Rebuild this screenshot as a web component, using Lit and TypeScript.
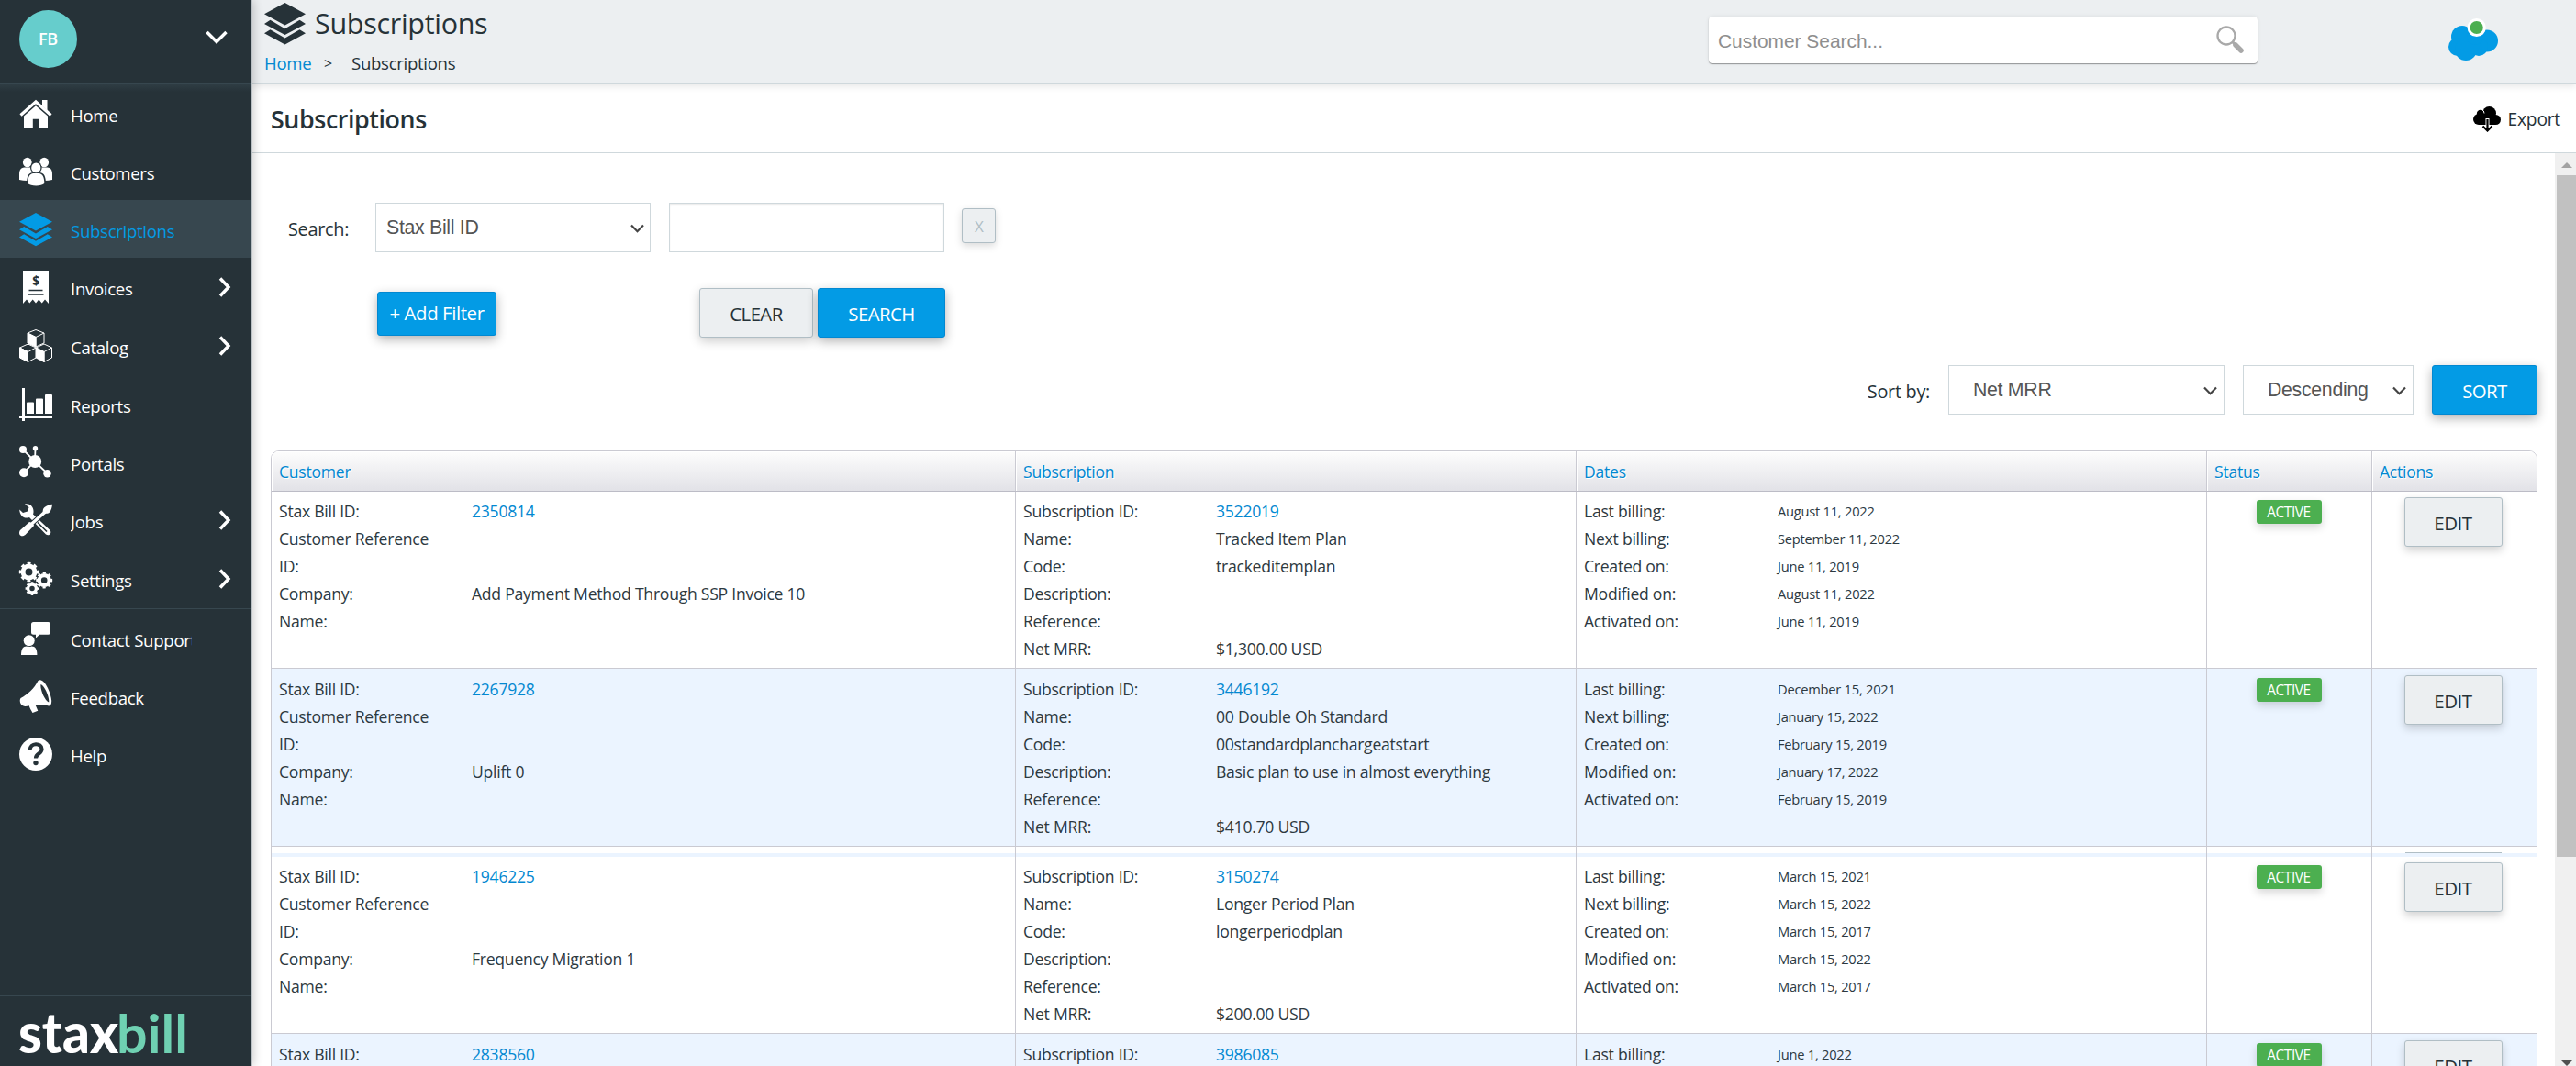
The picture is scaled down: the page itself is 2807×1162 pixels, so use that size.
import { LitElement, html, svg, css, nothing } from "lit";
import { customElement, property } from "lit/decorators.js";
import { classMap } from "lit/directives/class-map.js";

interface Subscription {
  customerId: string;
  company: string;
  id: string;
  name: string;
  code: string;
  description: string;
  mrr: string;
  dates: string[];
}

const subscriptions: Subscription[] = [
  {
    customerId: "2350814",
    company: "Add Payment Method Through SSP Invoice 10",
    id: "3522019",
    name: "Tracked Item Plan",
    code: "trackeditemplan",
    description: "",
    mrr: "$1,300.00 USD",
    dates: ["August 11, 2022", "September 11, 2022", "June 11, 2019", "August 11, 2022", "June 11, 2019"],
  },
  {
    customerId: "2267928",
    company: "Uplift 0",
    id: "3446192",
    name: "00 Double Oh Standard",
    code: "00standardplanchargeatstart",
    description: "Basic plan to use in almost everything",
    mrr: "$410.70 USD",
    dates: ["December 15, 2021", "January 15, 2022", "February 15, 2019", "January 17, 2022", "February 15, 2019"],
  },
  {
    customerId: "1946225",
    company: "Frequency Migration 1",
    id: "3150274",
    name: "Longer Period Plan",
    code: "longerperiodplan",
    description: "",
    mrr: "$200.00 USD",
    dates: ["March 15, 2021", "March 15, 2022", "March 15, 2017", "March 15, 2022", "March 15, 2017"],
  },
  {
    customerId: "2838560",
    company: "",
    id: "3986085",
    name: "",
    code: "",
    description: "",
    mrr: "",
    dates: ["June 1, 2022"],
  },
];

const gear = (cx: number, cy: number, r: number) => svg`
  <circle cx=${cx} cy=${cy} r=${r * 0.6} fill="none" stroke="currentColor" stroke-width=${r * 0.46} />
  <circle cx=${cx} cy=${cy} r=${r * 0.88} fill="none" stroke="currentColor" stroke-width=${r * 0.24}
    pathLength="16" stroke-dasharray="1.05 0.95" stroke-dashoffset="0.5" />
`;

const icons = {
  home: svg`
    <path d="M1.5 19.5 L18 5 L34.5 19.5" fill="none" stroke="currentColor" stroke-width="3.2" stroke-linejoin="miter" />
    <path d="M25 3h5.5v11.5L25 9.5z" />
    <path d="M18 9.3 L31 20.6V33H21.2v-9.2h-6.4V33H5V20.6z" />
  `,
  customers: svg`
    <path d="M0 27v-6c0-5 1.500-7 5.500-7.600h7c3 .5 4 3 4 6V27q-8 2-16.500 0z" />
    <path d="M36 27v-6c0-5-1.500-7-5.500-7.600h-7c-3 .5-4 3-4 6V27q8 2 16.500 0z" />
    <ellipse cx="8.800" cy="8" rx="4.900" ry="5.300" />
    <ellipse cx="27.200" cy="8" rx="4.900" ry="5.300" />
    <ellipse class="cut" cx="18.300" cy="13.900" rx="6.300" ry="6.500" />
    <path class="cut" d="M8 33c0-9 1.500-13.500 6.500-14h8c5 .5 6.500 5 6.500 14z" />
    <path d="M9.300 31c0-7 2-10.500 6-11h6c4 .5 6 4 6 11-3 3.200-15 3.200-18 0z" />
    <ellipse cx="18.300" cy="13.900" rx="5.100" ry="5.400" />
  `,
  layers: svg`
    <path d="M18 0 36 9.800 18 19.600 0 9.800z" />
    <path d="M0 18.300 5.200 15 18 22.500 30.800 15 36 18.300 18 28z" />
    <path d="M0 26.600 5.200 23.300 18 30.800 30.800 23.300 36 26.600 18 36.300z" />
  `,
  invoices: svg`
    <path d="M4 0h28v36l-4-4.500-3.300 4-3.400-4-3.300 4-3.300-4-3.400 4-3.300-4L4 36z" />
    <path class="cut-line" d="M10.500 21.500h15M9.500 26h17" />
    <text class="cut" x="18" y="15.500" text-anchor="middle" font-size="14" font-weight="700">$</text>
  `,
  catalog: svg`
    <g stroke="currentColor" stroke-width="1" stroke-linejoin="round">
      <path fill="none" d="M9 4 18 .5 27 4 18 8.500zM27 4v11l-9 4V8.500" />
      <path d="M9 4 18 8.500V19l-9-4z" />
      <path fill="none" d="M.5 20 9.500 16 18.200 20 9.500 24.500zM18.200 20v11l-8.700 4.500v-11" />
      <path d="M.5 20 9.500 24.500v11L.5 31z" />
      <path fill="none" d="M18.200 20 27 16l8.500 4-8.500 4.500zM35.500 20v11L27 35.500v-11" />
      <path d="M18.200 20 27 24.500v11L18.200 31z" />
    </g>
  `,
  reports: svg`
    <path d="M3 0h3v36H3zM0 30h36v3H0zM8 16.500q0-1 1-1h6q1 0 1 1V28H8zM18 12.500q0-1 1-1h6q1 0 1 1V28h-8zM28 8q0-1 1-1h6q1 0 1 1v20h-8z" />
  `,
  portals: svg`
    <path d="M4 4 17 17M17.500 2.500 17 17M5 29 17 17 30.500 30" fill="none" stroke="currentColor" stroke-width="1.800" />
    <circle cx="17.200" cy="17" r="7" />
    <circle cx="4" cy="4" r="4" />
    <circle cx="17.500" cy="2.700" r="2.700" />
    <circle cx="5" cy="29.300" r="5" />
    <circle cx="30.500" cy="30.300" r="4.200" />
  `,
  jobs: svg`
    <path d="M6 .5C11-.8 15.500 3 15.500 8c0 1.500 0 2.500-.5 3.500L33.500 29c2.500 3-1 7-4.500 4.500L11 15C5.500 17 .5 13.500.2 6.500L4 10l5-1.500L10.500 4z" />
    <path class="cut-line" d="M20 20.500 30 30.500" />
    <path class="halo" d="M36 .8c-.3 3-1 6-2.700 8.500-1.500 1.800-3.500 1.200-5 2L15.500 22.500 16 24 6.500 34c-4.500 3.500-8-.5-5.800-4.700L11 20l1.800.5L25.500 9C26 7.500 25.500 5.500 27.500 4 30 2 33 1 36 .8z" />
  `,
  settings: svg`${gear(10.5, 10.5, 10.7)}${gear(27.2, 19.5, 9)}${gear(14, 28.6, 7.4)}`,
  contact: svg`
    <path d="M15.500 0h16q2.500 0 2.500 2.500v8.700q0 2.500-2.500 2.500H22L18 17.500V13.700h-2.500q-2.500 0-2.500-2.500V2.500Q13 0 15.500 0z" />
    <circle cx="10.700" cy="20.300" r="6" />
    <path d="M2 36c0-6.500 2-9.500 6-9.500 1.700.8 3.700.8 5.400 0 4 0 6 3 6 9.500z" />
  `,
  feedback: svg`
    <path fill-rule="evenodd" d="M20.500 1C24-1.500 28 2.500 31 9c3.500 7.500 5.500 15 3.200 18.500-.8 1-2.300 1.200-4 .6C26 27 22 26.500 17.500 27.300l2.800 6.500-5.800 2.200c-1.500-2.500-3-5-3.800-7.700-4 1-7 .8-8.500-1.200C.5 24.500.3 21.700 1.500 20 9 16 16.500 9.500 20.500 1zM23.500 5c-1 5 4 17.500 8.700 19.500C33 19.500 28 7 23.500 5z" />
  `,
  help: svg`
    <circle cx="18" cy="18" r="18" />
    <path d="M11.500 14c0-9 13-8.500 13-1.500 0 5.500-6.500 4.500-6.500 10" class="question" />
    <circle class="cut" cx="18" cy="27.600" r="2.700" />
  `,
};

type IconName = keyof typeof icons;

@customElement("nav-icon")
class NavIcon extends LitElement {
  static styles = css`
    :host {
      display: block;
      flex: none;
      width: 36px;
      height: 36px;
    }
    svg {
      display: block;
      width: 100%;
      height: 100%;
      overflow: visible;
      fill: currentColor;
      font-family: "Open Sans", sans-serif;
    }
    .cut {
      fill: #263238;
    }
    .cut-line {
      fill: none;
      stroke: #263238;
      stroke-width: 1.6;
    }
    .halo {
      stroke: #263238;
      stroke-width: 2;
      paint-order: stroke;
    }
    .question {
      fill: none;
      stroke: #263238;
      stroke-width: 4.2;
    }
  `;
  @property() name: IconName = "home";

  render() {
    return html`<svg viewBox="0 0 36 36">${icons[this.name]}</svg>`;
  }
}

@customElement("side-nav")
class SideNav extends LitElement {
  static styles = css`
    :host {
      display: flex;
      flex-direction: column;
      flex: none;
      position: relative;
      z-index: 2;
      width: 274px;
      height: 1162px;
      box-sizing: content-box;
      border-right: 1px solid #b9c0c4;
      background: #263238;
      color: #fff;
      box-shadow: 1px 0 10px rgba(0, 0, 0, 0.22);
    }
    .user {
      display: flex;
      align-items: flex-start;
      justify-content: space-between;
      height: 80px;
      padding: 11px 26px 0 21px;
      border-bottom: 1px solid #37474f;
    }
    .avatar {
      width: 63px;
      height: 63px;
      border-radius: 50%;
      background: #66cdcc;
      font-size: 18px;
      font-weight: 600;
      line-height: 63px;
      text-align: center;
      letter-spacing: -0.3px;
    }
    .caret {
      width: 24px;
      height: 16px;
      margin-top: 22px;
    }
    .caret path,
    .arrow path {
      fill: none;
      stroke: #fff;
      stroke-width: 3.4;
    }
    .group {
      border-bottom: 1px solid #37474f;
      background: linear-gradient(rgba(55, 71, 79, 0.5), transparent 8px);
    }
    .group + .group {
      background: none;
    }
    .item {
      display: flex;
      align-items: center;
      height: 63px;
      padding: 0 22px 0 21px;
      font-size: 18.6px;
      letter-spacing: -0.3px;
    }
    .item.parent {
      height: 64px;
    }
    .item.active {
      background: #37474f;
      color: #039be5;
    }
    .label {
      width: 132px;
      margin-left: 20px;
      padding-top: 3px;
      overflow: hidden;
      white-space: nowrap;
    }
    .arrow {
      width: 14px;
      height: 22px;
      margin-left: auto;
    }
    .logo {
      margin-top: auto;
      height: 76px;
      border-top: 1px solid #37474f;
    }
    .logo svg {
      display: block;
      width: 274px;
      height: 76px;
      font-family: Lato, sans-serif;
    }
    .stax {
      fill: #fff;
      font-size: 60px;
      font-weight: 900;
    }
    .bill {
      fill: #6fd1b2;
      font-size: 58px;
      font-weight: 700;
    }
  `;

  item(icon: IconName, label: string, parent = false) {
    const active = label === "Subscriptions";
    return html`
      <div class=${classMap({ item: true, parent, active })}>
        <nav-icon name=${icon}></nav-icon>
        <span class="label">${label}</span>
        ${parent ? html`<svg class="arrow" viewBox="0 0 14 22"><path d="M2 1.500 11 11 2 20.500" /></svg>` : nothing}
      </div>
    `;
  }

  render() {
    return html`
      <div class="user">
        <div class="avatar">FB</div>
        <svg class="caret" viewBox="0 0 24 16"><path d="M1.500 2 12 12.500 22.500 2" /></svg>
      </div>
      <div class="group">
        ${this.item("home", "Home")}
        ${this.item("customers", "Customers")}
        ${this.item("layers", "Subscriptions")}
        ${this.item("invoices", "Invoices", true)}
        ${this.item("catalog", "Catalog", true)}
        ${this.item("reports", "Reports")}
        ${this.item("portals", "Portals")}
        ${this.item("jobs", "Jobs", true)}
        ${this.item("settings", "Settings", true)}
      </div>
      <div class="group">
        ${this.item("contact", "Contact Support")}
        ${this.item("feedback", "Feedback")}
        ${this.item("help", "Help")}
      </div>
      <div class="logo">
        <svg viewBox="0 0 274 76">
          <text class="stax" x="20" y="62" textLength="109" lengthAdjust="spacingAndGlyphs">stax</text>
          <text class="bill" x="127" y="62" textLength="78" lengthAdjust="spacingAndGlyphs">bill</text>
        </svg>
      </div>
    `;
  }
}

@customElement("subscription-table")
class SubscriptionTable extends LitElement {
  static styles = css`
    :host {
      display: block;
      border: 1px solid #cacad2;
      border-radius: 9px 9px 0 0;
      overflow: hidden;
      font-size: 17.6px;
      letter-spacing: -0.26px;
    }
    .row {
      display: grid;
      grid-template-columns: 811px 611px 687px 180px 179px;
      box-sizing: border-box;
      height: 193.6px;
      border-bottom: 1px solid #cacad2;
      background: #fff;
    }
    .row.alt {
      background: #ebf4ff;
    }
    .head {
      height: 43.6px;
      border-bottom: 1px solid #bcbcc6;
      background: linear-gradient(#fdfdfd, #e2e2e7);
      color: #0288d1;
      line-height: 42px;
      text-shadow: 1px 1px 0 #fff;
    }
    .cell {
      box-sizing: border-box;
      padding: 6.6px 0 0 8px;
      border-right: 1px solid #cacad2;
      overflow: hidden;
    }
    .cell:last-child {
      border-right: 0;
    }
    .head .cell {
      padding-top: 1px;
      box-shadow: inset 1px 1px 0 #fff;
    }
    .field {
      display: flex;
      line-height: 30px;
      color: #2d393f;
    }
    .label {
      flex: none;
      width: 180px;
      margin-right: 30px;
    }
    .value {
      white-space: nowrap;
    }
    .date {
      font-size: 14.7px;
      margin-left: 1px;
      letter-spacing: -0.25px;
    }
    .link {
      color: #0288d1;
    }
    .center {
      display: flex;
      align-items: flex-start;
      justify-content: center;
      padding-left: 0;
      padding-right: 1px;
    }
    .center:last-child {
      padding-right: 3px;
    }
    .badge {
      width: 71px;
      height: 26px;
      margin-top: 3px;
      border-radius: 3px;
      background: #4caf50;
      color: #fff;
      font-size: 15.4px;
      line-height: 27px;
      text-align: center;
      letter-spacing: -0.4px;
      box-shadow: 0 4px 10px rgba(0, 0, 0, 0.16);
    }
    .edit {
      box-sizing: border-box;
      width: 107px;
      height: 54px;
      border: 1px solid #b0bec5;
      border-radius: 3px;
      background: #eceff1;
      font-size: 20.5px;
      line-height: 54px;
      text-align: center;
      letter-spacing: -0.5px;
      box-shadow: 0 4px 10px rgba(0, 0, 0, 0.18);
    }
    .seam {
      display: grid;
      grid-template-columns: 811px 611px 687px 180px 179px;
      height: 11px;
      background: linear-gradient(#fff 7px, #ebf4ff 7px);
    }
    .seam .cell {
      padding-top: 6px;
    }
    .stub {
      width: 105px;
      height: 1px;
      background: #b0bec5;
    }
  `;

  field(label: string, value = "", kind = "") {
    return html`
      <div class="field">
        <span class="label">${label}</span>
        <span class="value ${kind}">${value}</span>
      </div>
    `;
  }

  row(s: Subscription, index: number) {
    const dates = ["Last billing:", "Next billing:", "Created on:", "Modified on:", "Activated on:"];
    return html`
      <div class=${classMap({ row: true, alt: index % 2 === 1 })}>
        <div class="cell">
          ${this.field("Stax Bill ID:", s.customerId, "link")}
          ${this.field("Customer Reference ID:")}
          ${this.field("Company:", s.company)}
          ${this.field("Name:")}
        </div>
        <div class="cell">
          ${this.field("Subscription ID:", s.id, "link")}
          ${this.field("Name:", s.name)}
          ${this.field("Code:", s.code)}
          ${this.field("Description:", s.description)}
          ${this.field("Reference:")}
          ${this.field("Net MRR:", s.mrr)}
        </div>
        <div class="cell">${dates.map((label, i) => this.field(label, s.dates[i], "date"))}</div>
        <div class="cell center"><span class="badge">ACTIVE</span></div>
        <div class="cell center"><span class="edit">EDIT</span></div>
      </div>
    `;
  }

  render() {
    return html`
      <div class="row head">
        ${["Customer", "Subscription", "Dates", "Status", "Actions"].map((t) => html`<div class="cell">${t}</div>`)}
      </div>
      ${subscriptions.slice(0, 2).map((s, i) => this.row(s, i))}
      <div class="seam">
        <div class="cell"></div>
        <div class="cell"></div>
        <div class="cell"></div>
        <div class="cell"></div>
        <div class="cell center"><div class="stub"></div></div>
      </div>
      ${subscriptions.slice(2).map((s, i) => this.row(s, i))}
    `;
  }
}

@customElement("app-root")
class AppRoot extends LitElement {
  static styles = css`
    :host {
      display: flex;
      width: 2807px;
      height: 1162px;
      overflow: hidden;
      background: #fff;
      color: #263238;
      font-family: "Open Sans", "Noto Sans", sans-serif;
    }
    .main {
      flex: 1;
      min-width: 0;
      display: flex;
      flex-direction: column;
    }
    .header {
      display: flex;
      position: relative;
      z-index: 1;
      flex: none;
      height: 91px;
      padding-left: 13px;
      border-bottom: 1px solid #cfd8dc;
      background: #eceff1;
      box-shadow: 0 2px 8px rgba(0, 0, 0, 0.1);
    }
    .where {
      width: 1574px;
    }
    .title {
      display: flex;
      align-items: center;
      height: 50px;
      gap: 10px;
      font-size: 30.5px;
      letter-spacing: -0.3px;
    }
    .title nav-icon {
      width: 45px;
      height: 45px;
    }
    .crumbs {
      display: flex;
      font-size: 18.6px;
      line-height: 38px;
      letter-spacing: -0.3px;
    }
    .crumbs a {
      width: 65px;
      color: #0288d1;
    }
    .crumbs .sep {
      width: 30px;
      font-size: 16px;
    }
    .search {
      display: flex;
      align-items: center;
      justify-content: space-between;
      box-sizing: border-box;
      width: 598px;
      height: 51px;
      margin-top: 18px;
      padding: 2px 15px 0 10px;
      border-radius: 4px;
      background: #fff;
      color: #8e8e8e;
      font: 20.9px "Liberation Sans", Arial, sans-serif;
      box-shadow: 0 1px 1px rgba(0, 0, 0, 0.35), 0 0 4px rgba(0, 0, 0, 0.08);
    }
    .search svg {
      width: 30px;
      height: 30px;
      margin-bottom: 4px;
    }
    .cloud {
      width: 56px;
      height: 48px;
      margin: 19px 0 0 207px;
    }
    .toolbar {
      display: flex;
      justify-content: space-between;
      flex: none;
      height: 74px;
      padding: 0 17px 0 20px;
      border-bottom: 1px solid #cfd8dc;
      line-height: 76px;
    }
    .toolbar h1 {
      margin: 0;
      font-size: 26.8px;
      font-weight: 600;
      letter-spacing: -0.4px;
    }
    .export {
      display: flex;
      align-items: center;
      gap: 8px;
      padding-top: 2px;
      font-size: 19.2px;
      letter-spacing: -0.2px;
    }
    .export svg {
      width: 30px;
      height: 28px;
    }
    .body {
      display: flex;
      flex: 1;
      min-height: 0;
    }
    .content {
      flex: 1;
      height: 995px;
      padding: 54px 19px 0 20px;
      box-sizing: border-box;
      overflow: hidden;
    }
    .line {
      display: flex;
      height: 54px;
      font-size: 19.9px;
      letter-spacing: -0.3px;
    }
    .line .label {
      line-height: 57px;
    }
    .filters {
      padding-left: 19px;
    }
    .filters .label {
      width: 95px;
    }
    .box {
      display: flex;
      align-items: center;
      justify-content: space-between;
      box-sizing: border-box;
      height: 54px;
      padding: 1px 6px 0 11px;
      border: 1px solid #cfd8dc;
      color: #555;
      font: 21.3px "Liberation Sans", Arial, sans-serif;
    }
    .box svg {
      width: 15px;
      height: 10px;
      fill: none;
      stroke: #444;
      stroke-width: 2.2;
    }
    .field-select,
    .term {
      width: 300px;
    }
    .term {
      margin: 0 19px 0 20px;
      box-shadow: inset 0 2px 2px rgba(0, 0, 0, 0.07);
    }
    .button {
      box-sizing: border-box;
      height: 54px;
      border: 1px solid #b0bec5;
      border-radius: 3px;
      background: #eceff1;
      font-size: 20.4px;
      line-height: 54px;
      text-align: center;
      letter-spacing: -0.6px;
      box-shadow: 0 4px 12px rgba(0, 0, 0, 0.2);
    }
    .button.primary {
      border-color: #0288d1;
      background: #039be5;
      color: #fff;
      box-shadow: 0 4px 12px rgba(0, 0, 0, 0.3);
    }
    .button.remove {
      width: 37px;
      height: 38px;
      margin-top: 6px;
      color: #b0bec5;
      font-size: 17px;
      line-height: 38px;
      box-shadow: 0 3px 8px rgba(0, 0, 0, 0.15);
    }
    .actions {
      margin-top: 39px;
      padding-left: 116px;
    }
    .button.add {
      width: 130px;
      height: 48px;
      margin: 4px 221px 0 0;
      line-height: 45px;
      letter-spacing: -0.4px;
    }
    .clear {
      width: 124px;
      margin-right: 5px;
    }
    .go {
      width: 139px;
    }
    .sorting {
      justify-content: flex-end;
      margin-top: 30px;
      margin-bottom: 39px;
    }
    .sorting .label {
      margin-right: 20px;
    }
    .sorting .box {
      margin-right: 20px;
      padding: 1px 7px 0 26px;
    }
    .by {
      width: 301px;
    }
    .direction {
      width: 186px;
    }
    .sort {
      width: 115px;
    }
    .scrollbar {
      display: flex;
      flex-direction: column;
      align-items: flex-end;
      width: 23px;
      background: #f0f0f0;
    }
    .up {
      align-self: flex-start;
      margin: 10px 0 8px 7px;
      border: 6px solid transparent;
      border-top: 0;
      border-bottom: 6px solid #a3a3a3;
    }
    .thumb {
      width: 21px;
      height: 743px;
      background: #c1c1c1;
    }
    .down {
      align-self: flex-start;
      margin: auto 0 0 7px;
      border: 6px solid transparent;
      border-top: 6px solid #505050;
      border-bottom: 0;
    }
  `;

  chevron() {
    return html`<svg viewBox="0 0 15 10"><path d="M1 1.500 7.500 8.200 14 1.500" /></svg>`;
  }

  render() {
    return html`
      <side-nav></side-nav>
      <div class="main">
        <div class="header">
          <div class="where">
            <div class="title"><nav-icon name="layers"></nav-icon>Subscriptions</div>
            <div class="crumbs"><a>Home</a><span class="sep">&gt;</span><span>Subscriptions</span></div>
          </div>
          <div class="search">
            Customer Search...
            <svg viewBox="0 0 30 30" fill="none" stroke="#a9a9a9">
              <circle cx="11" cy="11" r="9.500" stroke-width="2.300" />
              <path d="M17.500 17.500 21 21" stroke-width="3" />
              <path d="M21 21 27 27" stroke-width="5.500" stroke-linecap="round" />
            </svg>
          </div>
          <svg class="cloud" viewBox="0 0 56 48" fill="#039be5">
            <circle cx="16" cy="21" r="12" />
            <circle cx="11" cy="32" r="10" />
            <circle cx="20" cy="35" r="12" />
            <circle cx="43" cy="25.500" r="12" />
            <circle cx="34" cy="32" r="10" />
            <circle cx="30" cy="21" r="9" />
            <circle cx="31.700" cy="11" r="8.600" fill="#4caf50" stroke="#fff" stroke-width="3" />
          </svg>
        </div>
        <div class="toolbar">
          <h1>Subscriptions</h1>
          <div class="export">
            <svg viewBox="0 0 30 28">
              <circle cx="6" cy="14" r="6" />
              <circle cx="8" cy="8" r="4.200" />
              <circle cx="17.500" cy="7.500" r="7.500" />
              <circle cx="24.500" cy="14.500" r="5.500" />
              <path d="M6 8h18v12H6z" />
              <path d="M9.500 3.500q2.500 1 2.500 4" fill="none" stroke="#fff" />
              <path d="M13.500 28V13h4v15z" fill="#fff" />
              <path d="M15.500 14v12M10.500 21.500l5 5 5-5" fill="none" stroke="#000" stroke-width="2.200" />
            </svg>
            Export
          </div>
        </div>
        <div class="body">
          <div class="content">
            <div class="line filters">
              <span class="label">Search:</span>
              <div class="box field-select">Stax Bill ID ${this.chevron()}</div>
              <div class="box term"></div>
              <div class="button remove">X</div>
            </div>
            <div class="line actions">
              <div class="button primary add">+ Add Filter</div>
              <div class="button clear">CLEAR</div>
              <div class="button primary go">SEARCH</div>
            </div>
            <div class="line sorting">
              <span class="label">Sort by:</span>
              <div class="box by">Net MRR ${this.chevron()}</div>
              <div class="box direction">Descending ${this.chevron()}</div>
              <div class="button primary sort">SORT</div>
            </div>
            <subscription-table></subscription-table>
          </div>
          <div class="scrollbar">
            <div class="up"></div>
            <div class="thumb"></div>
            <div class="down"></div>
          </div>
        </div>
      </div>
    `;
  }
}
